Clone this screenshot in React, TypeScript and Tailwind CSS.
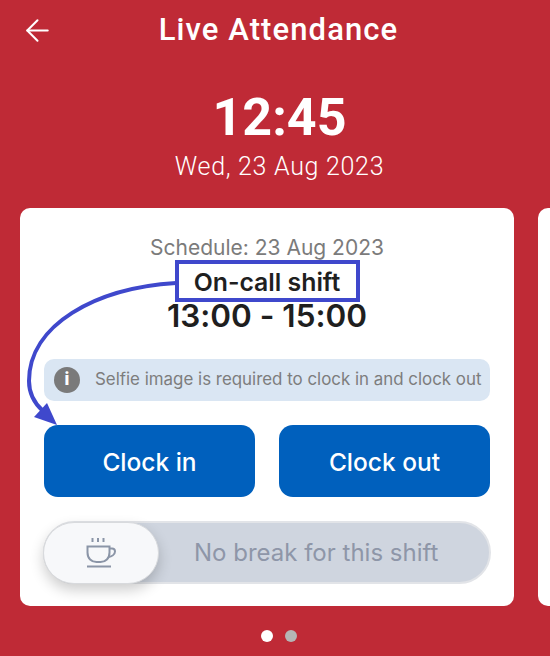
import { ArrowLeft } from "lucide-react";

function CoffeeIcon() {
  return (
    <svg width="32" height="32" viewBox="0 0 32 32" fill="none" stroke="#8b95a7" strokeWidth="2">
      <path d="M8.5 1v4M14 1v4M19.5 1v4" />
      <path d="M3.5 9.5h22v6c0 6-4 9.5-9 9.5h-4c-5 0-9-3.500-9-9.500z" />
      <path d="M25.5 11.5h2.5c1.700 0 3 1.300 3 3 0 3-3.500 5-6.500 5.500" />
      <path d="M3 29.500h24" />
    </svg>
  );
}

export default function App() {
  return (
    <div className="relative h-[656px] w-[550px] overflow-hidden bg-[#bf2a36] font-['Inter',sans-serif] [font-feature-settings:'calt'_0]">
      {/* HEADER */}
      <div className="relative flex h-[60px] items-center justify-center pl-[7px]">
        <ArrowLeft size={35} strokeWidth={1.4} className="absolute left-[20px] top-[13px] text-white" />
        <h1 className="font-['Roboto',sans-serif] text-[31px] font-medium tracking-[1.1px] text-white">Live Attendance</h1>
      </div>

      {/* CLOCK */}
      <div className="mt-[29px] flex flex-col items-center pl-[9px] text-white">
        <p className="font-['Roboto',sans-serif] text-[52px] leading-[58px] font-bold">12:45</p>
        <p className="mt-[6px] font-['Roboto',sans-serif] text-[25px] leading-[28px] font-light tracking-[0.7px]">Wed, 23 Aug 2023</p>
      </div>

      {/* CARDS */}
      <div className="mt-[27px] flex gap-6 pl-5">
        <div className="h-[398px] w-[494px] shrink-0 rounded-[10px] bg-white px-6 pt-[27px]">
          <div className="flex flex-col items-center">
            <p className="text-[21px] leading-[26px] text-[#7b7b7b]">Schedule: 23 Aug 2023</p>
            <p className="text-[24.8px] leading-[42px] font-semibold text-[#1f1f1f]">On-call shift</p>
            <p className="-mt-[2px] text-[31.5px] leading-[30px] font-semibold text-[#1f1f1f]">13:00 - 15:00</p>
          </div>

          <div className="mt-[28px] flex h-[42px] items-center gap-[15px] rounded-[10px] bg-[#dae6f3] pl-[10px]">
            <span className="flex h-[26px] w-[26px] shrink-0 items-center justify-center rounded-full bg-[#7a7a7a] text-[17px] font-extrabold text-white">
              i
            </span>
            <p className="text-[16.9px] whitespace-nowrap text-[#7d7d7d]">Selfie image is required to clock in and clock out</p>
          </div>

          <div className="mt-6 grid grid-cols-2 gap-6">
            <button className="h-[72px] rounded-[14px] bg-[#0060bd] pt-[2px] text-[24.5px] font-medium text-white">Clock in</button>
            <button className="h-[72px] rounded-[14px] bg-[#0060bd] pt-[2px] text-[24.5px] font-medium text-white">Clock out</button>
          </div>

          <div className="-mx-px mt-6 flex h-[63px] items-center rounded-full border-2 border-[#e2e4e8] bg-[#cfd5df]">
            <div className="-ml-[2px] flex h-[62px] w-[116px] shrink-0 items-center justify-center rounded-full border border-[#d8dadd] bg-[#f7f8fa] pr-[3px] shadow-[0_6px_14px_rgba(0,0,0,0.2)]">
              <CoffeeIcon />
            </div>
            <p className="ml-[35px] text-[24px] text-[#8e96a8]">No break for this shift</p>
          </div>
        </div>
        <div className="h-[398px] w-[494px] shrink-0 rounded-[10px] bg-white" />
      </div>

      {/* DOTS */}
      <div className="mt-[24px] flex justify-center gap-[12px] pl-2">
        <span className="h-3 w-3 rounded-full bg-white" />
        <span className="h-3 w-3 rounded-full bg-[#b5b5b5]" />
      </div>

      {/* ANNOTATION */}
      <div className="absolute left-[175px] top-[260px] h-[42px] w-[185px] border-4 border-[#3f48cc]" />
      <svg className="absolute left-0 top-0" width="550" height="656" fill="none">
        <path d="M176 283C95 288 29 325 29 381C29 392 34 403 43 411" stroke="#3f48cc" strokeWidth="4" />
        <path d="M34 417L47 403L57 425z" fill="#3f48cc" />
      </svg>
    </div>
  );
}
